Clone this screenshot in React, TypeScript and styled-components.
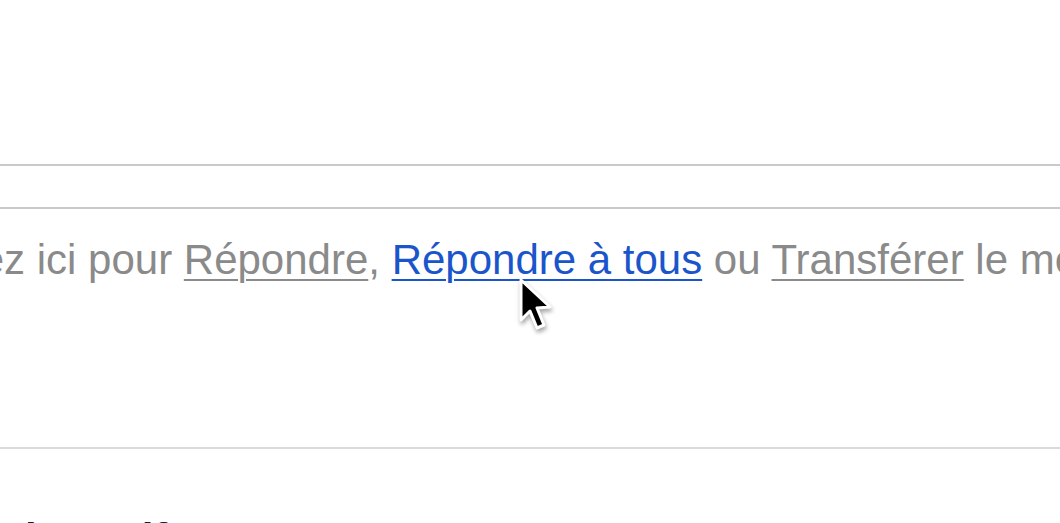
import React from "react";
import styled, { createGlobalStyle } from "styled-components";

const Global = createGlobalStyle`
  html, body { margin: 0; padding: 0; background: #fff; }
  body { overflow: hidden; }
`;

const Page = styled.div`
  position: relative;
  width: 1060px;
  height: 523px;
  overflow: hidden;
  display: flex;
  flex-direction: column;
  font-family: "Liberation Sans", Arial, sans-serif;
  background: #fff;
`;

const Spacer = styled.div<{ $h: number }>`
  height: ${(p) => p.$h}px;
  flex: none;
`;

const Rule = styled.div<{ $light?: boolean }>`
  height: 2px;
  flex: none;
  background: ${(p) => (p.$light ? "#dadada" : "#c9c9c9")};
`;

const ReplyLine = styled.div`
  margin-top: 27px;
  margin-left: -115px;
  font-size: 42px;
  line-height: 48px;
  color: #8a8a8a;
  white-space: nowrap;
`;

const Link = styled.a<{ $active?: boolean }>`
  color: ${(p) => (p.$active ? "#1a55cc" : "#8a8a8a")};
  text-decoration: underline;
  text-decoration-thickness: 2px;
  text-underline-offset: 5px;
  cursor: pointer;
`;

const Footer = styled.div`
  margin-top: 66px;
  padding-left: 25px;
  font-size: 42px;
  line-height: 48px;
  font-weight: bold;
  color: #1c1c3a;
  white-space: pre;
`;

const Cursor = styled.svg`
  position: absolute;
  left: 512px;
  top: 274px;
  width: 48px;
  height: 64px;
  filter: drop-shadow(1px 3px 2px rgba(0, 0, 0, 0.35));
`;

export default function App() {
  return (
    <Page>
      <Global />
      <Spacer $h={164} />
      <Rule />
      <Spacer $h={41} />
      <Rule />
      <ReplyLine>
        Cliquez ici pour <Link>Répondre</Link>, <Link $active>Répondre à tous</Link> ou{" "}
        <Link>Transférer</Link> le message
      </ReplyLine>
      <Spacer $h={163} />
      <Rule $light />
      <Footer>{"l         lf 2"}</Footer>
      <Cursor viewBox="0 0 48 64">
        <path
          d="M9 6 L9 46 L18 37 L25 54 L32 51 L25 34 L38 33 Z"
          fill="#000"
          stroke="#fff"
          strokeWidth="3"
          strokeLinejoin="round"
        />
      </Cursor>
    </Page>
  );
}
